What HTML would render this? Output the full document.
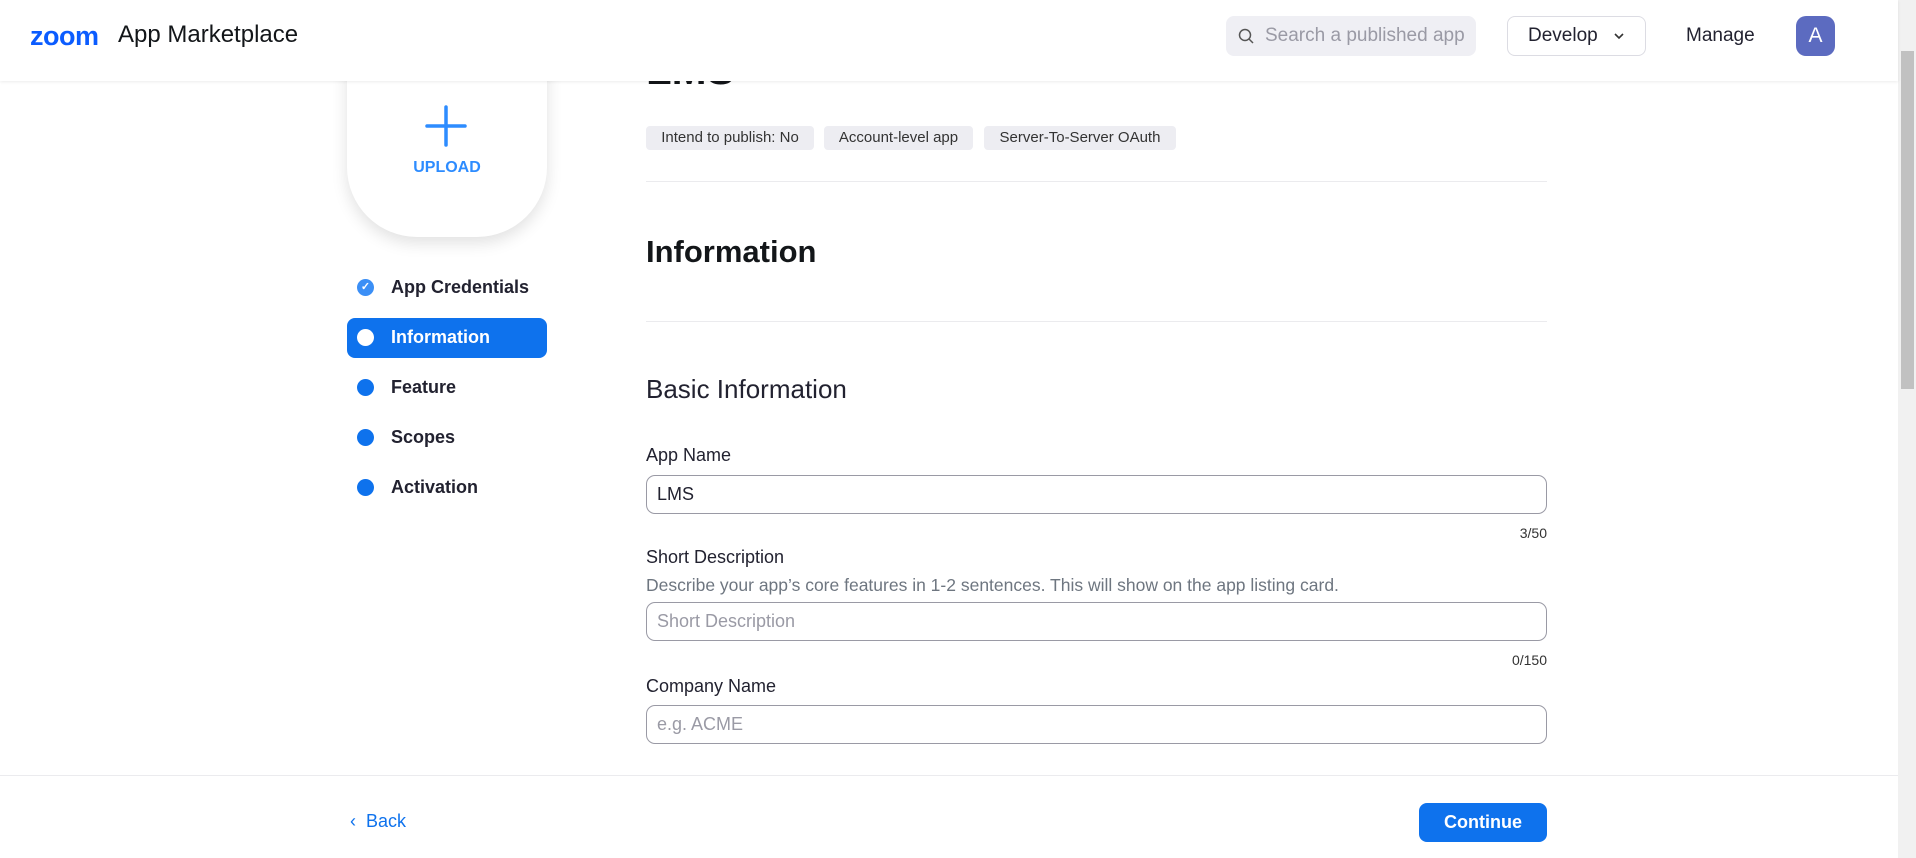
<!DOCTYPE html>
<html><head><meta charset="utf-8"><style>
*{box-sizing:border-box;margin:0;padding:0}
body{width:1916px;height:858px;overflow:hidden;background:#fff;font-family:"Liberation Sans",sans-serif;color:#222230;position:relative}
.abs{position:absolute}
.hdr{left:0;top:0;width:1898px;height:81px;background:#fff;box-shadow:0 1px 3px rgba(0,0,0,.08);z-index:5}
.scroll{left:1898px;top:0;width:18px;height:858px;background:#f1f1f1}
.thumb{left:1901px;top:51px;width:13px;height:338px;background:#c1c1c1}
.card{left:347px;top:40px;width:200px;height:197px;border-radius:0 0 70px 70px;box-shadow:0 6px 16px rgba(0,0,0,.12);background:#fff}
.nav{left:365px;font-size:18px;font-weight:bold;color:#222230}
.dot{position:absolute;width:17px;height:17px;border-radius:50%;background:#0e72ed}
.tag{top:126px;height:24px;background:#ededf2;border-radius:4px;font-size:15px;color:#333;line-height:24px;text-align:center}
.line{left:646px;width:901px;height:1px;background:#ebebee}
.lbl{left:646px;font-size:18px;color:#222230}
.inp{left:646px;width:901px;height:39px;border:1px solid #9a9aa5;border-radius:9px;font-size:18px;line-height:37px;padding-left:10px}
.cnt{right:369px;font-size:14px;color:#333}
</style></head><body>
<div class="abs scroll"></div><div class="abs thumb"></div>
<div class="abs" style="left:646px;top:46px;font-size:42px;font-weight:bold;color:#131619">LMS</div>
<div class="abs hdr">
 <div class="abs" style="left:30px;top:21px;font-size:27px;font-weight:bold;color:#0b5cff;letter-spacing:-0.5px">zoom</div>
 <div class="abs" style="left:118px;top:21px;font-size:24px;color:#131619">App Marketplace</div>
 <div class="abs" style="left:1226px;top:16px;width:250px;height:40px;background:#efeff4;border-radius:8px">
  <svg class="abs" style="left:12px;top:12px" width="17" height="17" viewBox="0 0 17 17"><circle cx="7" cy="7" r="5.5" fill="none" stroke="#555" stroke-width="1.5"/><path d="M11 11l4 4" stroke="#555" stroke-width="1.5"/></svg>
  <div class="abs" style="left:39px;top:9px;font-size:19px;color:#9a9aa5;white-space:nowrap;width:205px;overflow:hidden">Search a published app</div>
 </div>
 <div class="abs" style="left:1507px;top:16px;width:139px;height:40px;border:1px solid #dcdce3;border-radius:8px;font-size:19px;line-height:38px;padding-left:20px">Develop
  <svg class="abs" style="left:106px;top:16px" width="10" height="7"><path d="M1 1l4 4 4-4" fill="none" stroke="#333" stroke-width="1.6"/></svg></div>
 <div class="abs" style="left:1686px;top:25px;font-size:19px">Manage</div>
 <div class="abs" style="left:1796px;top:16px;width:39px;height:40px;border-radius:10px;background:#5c6bc0;color:#fff;font-size:21px;text-align:center;line-height:40px">A</div>
</div>
<div class="abs card">
 <svg class="abs" style="left:78px;top:65px" width="42" height="42"><path d="M21 2v38M2 21h38" stroke="#2d8cff" stroke-width="3.5" stroke-linecap="round"/></svg>
 <div class="abs" style="left:0;width:200px;top:119px;text-align:center;font-size:16px;font-weight:bold;color:#2d8cff">UPLOAD</div>
</div>
<div class="abs" style="left:347px;top:318px;width:200px;height:40px;background:#0e72ed;border-radius:8px"></div>
<div class="abs nav" style="top:277px"><div class="dot" style="left:-8px;top:2px;background:#3b8ff6;color:#fff;font-size:11px;text-align:center;line-height:17px">✓</div><span style="margin-left:26px">App Credentials</span></div>
<div class="abs nav" style="top:327px;color:#fff"><div class="dot" style="left:-8px;top:2px;background:#fff"></div><span style="margin-left:26px">Information</span></div>
<div class="abs nav" style="top:377px"><div class="dot" style="left:-8px;top:2px"></div><span style="margin-left:26px">Feature</span></div>
<div class="abs nav" style="top:427px"><div class="dot" style="left:-8px;top:2px"></div><span style="margin-left:26px">Scopes</span></div>
<div class="abs nav" style="top:477px"><div class="dot" style="left:-8px;top:2px"></div><span style="margin-left:26px">Activation</span></div>
<div class="abs tag" style="left:646px;width:168px">Intend to publish: No</div>
<div class="abs tag" style="left:824px;width:149px">Account-level app</div>
<div class="abs tag" style="left:984px;width:192px">Server-To-Server OAuth</div>
<div class="abs line" style="top:181px"></div>
<div class="abs" style="left:646px;top:234px;font-size:31px;font-weight:bold;color:#131619">Information</div>
<div class="abs line" style="top:321px"></div>
<div class="abs" style="left:646px;top:374px;font-size:26px">Basic Information</div>
<div class="abs lbl" style="top:445px">App Name</div>
<div class="abs inp" style="top:475px">LMS</div>
<div class="abs cnt" style="top:525px">3/50</div>
<div class="abs lbl" style="top:547px">Short Description</div>
<div class="abs" style="left:646px;top:575px;font-size:17.5px;color:#6e7680">Describe your app’s core features in 1-2 sentences. This will show on the app listing card.</div>
<div class="abs inp" style="top:602px;color:#9a9aa5">Short Description</div>
<div class="abs cnt" style="top:652px">0/150</div>
<div class="abs lbl" style="top:676px">Company Name</div>
<div class="abs inp" style="top:705px;color:#9a9aa5">e.g. ACME</div>
<div class="abs" style="left:0;top:775px;width:1898px;height:83px;background:#fff;border-top:1px solid #ebebee"></div>
<div class="abs" style="left:350px;top:811px;font-size:18px;color:#0e72ed">&#8249;&nbsp; Back</div>
<div class="abs" style="left:1419px;top:803px;width:128px;height:39px;background:#0e72ed;border-radius:8px;color:#fff;font-size:18px;font-weight:bold;text-align:center;line-height:39px">Continue</div>
</body></html>
